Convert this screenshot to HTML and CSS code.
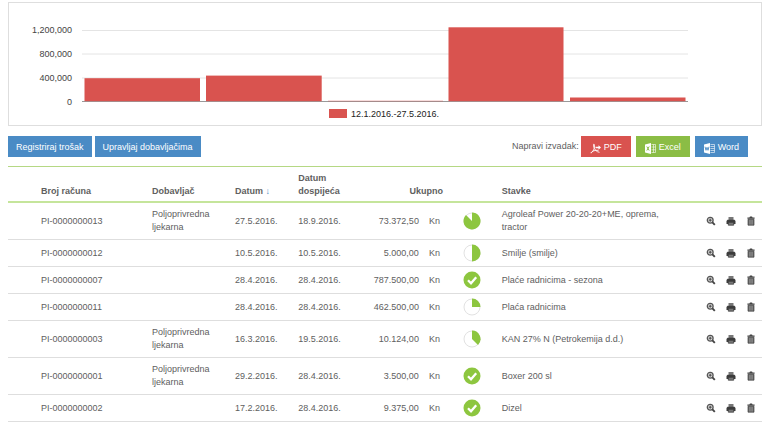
FILE: index.html
```html
<!DOCTYPE html>
<html lang="hr">
<head>
    <meta charset="UTF-8">
    <meta name="viewport" content="width=device-width, initial-scale=1.0">
    <title>Troškovi</title>
    <link rel="stylesheet" href="styles.css">
</head>
<body>
    <svg class="sprite" aria-hidden="true">
        <symbol id="i-check" viewBox="0 0 18 18">
            <circle cx="9" cy="9" r="8.5" fill="#8dc63f"/>
            <path d="M5 9.2l3 3 5.2-6" fill="none" stroke="#fff" stroke-width="2.3"/>
        </symbol>
        <symbol id="i-zoom" viewBox="0 0 10 10">
            <circle cx="4.2" cy="4.2" r="2.9" fill="#ddd" stroke="#555" stroke-width="1.3"/>
            <path d="M2.7 4.2h3M4.2 2.7v3" stroke="#444" stroke-width="1"/>
            <path d="M6.4 6.4l2.4 2.4" stroke="#444" stroke-width="1.9"/>
        </symbol>
        <symbol id="i-print" viewBox="0 0 10 10">
            <path d="M2.5 1h5v3h-5z" fill="#777"/>
            <path d="M1.5 3.8h7l1 1.2v3H.5V5z" fill="#3c3c3c"/>
            <path d="M2.3 6.3h5.4v2.9H2.3z" fill="#777" stroke="#3c3c3c" stroke-width=".8"/>
        </symbol>
        <symbol id="i-trash" viewBox="0 0 10 10">
            <path d="M1.4 1.6h2L4 .6h2l.6 1h2v1.2H1.4z" fill="#444"/>
            <path d="M2 3.2h6v6H2z" fill="#666" stroke="#444" stroke-width=".7"/>
            <path d="M3.7 4v4.5M5 4v4.5M6.3 4v4.5" stroke="#aaa" stroke-width=".5"/>
        </symbol>
    </svg>

    <section class="chart">
        <svg viewBox="0 0 752 122" role="img" aria-label="Troškovi 12.1.2016.-27.5.2016.">
            <g class="grid">
                <path d="M73 27.5h606M73 51h606M73 75h606"/>
            </g>
            <g class="axis-labels">
                <text x="63" y="30">1,200,000</text>
                <text x="63" y="54">800,000</text>
                <text x="63" y="78">400,000</text>
                <text x="63" y="102">0</text>
            </g>
            <path class="baseline" d="M73 98.5h606"/>
            <g class="bars">
                <rect x="75.5" y="75.2" width="115.5" height="23"/>
                <rect x="197" y="72.6" width="115.7" height="25.6"/>
                <rect x="319" y="97.8" width="115" height=".4"/>
                <rect x="439.5" y="24.3" width="115" height="73.9"/>
                <rect x="561" y="94.5" width="115.5" height="3.7"/>
            </g>
            <rect class="legend-key" x="320" y="106" width="18" height="9"/>
            <text class="legend" x="342" y="114">12.1.2016.-27.5.2016.</text>
        </svg>
    </section>

    <div class="toolbar">
        <button class="btn blue" type="button">Registriraj trošak</button>
        <button class="btn blue" type="button">Upravljaj dobavljačima</button>
        <div class="export">
            <span class="export-label">Napravi izvadak:</span>
            <button class="btn red" type="button">
                <svg class="file-icon" viewBox="0 0 11 11"><path d="M.8 10C3 9.400 5 5 4.300 1.600 4 .4 3.200 1.300 3.600 3 4.300 6.500 6.500 9 9.500 9.300M.8 10C2 7.800 5 7.200 8.500 7.300" fill="none" stroke="#fff" stroke-width=".9"/><path d="M5.500 3.800h3V2.300l2.500 2.200-2.500 2.200V5.200h-3z" fill="#fff"/></svg>
                PDF
            </button>
            <button class="btn green" type="button">
                <svg class="file-icon" viewBox="0 0 11 11"><path d="M0 1.500L6 0v11L0 9.500z" fill="#fff"/><path d="M6.500 1.500h4v8h-4M8.500 1.500v8M6.500 4h4M6.500 6.800h4" fill="none" stroke="#fff" stroke-width=".6"/><path d="M1.800 3.500l2.400 4M4.200 3.500l-2.400 4" stroke="#8bbd45" stroke-width="1"/></svg>
                Excel
            </button>
            <button class="btn blue" type="button">
                <svg class="file-icon" viewBox="0 0 11 11"><path d="M0 1.500L6 0v11L0 9.500z" fill="#fff"/><path d="M6.500 1.500h4v8h-4M6.500 3.500h4M6.500 5.500h4M6.500 7.500h4" fill="none" stroke="#fff" stroke-width=".6"/><path d="M1 3.700l1 3.600 1-3 1 3 1-3.600" fill="none" stroke="#4a8bc5" stroke-width=".9"/></svg>
                Word
            </button>
        </div>
    </div>

    <table class="expenses">
        <colgroup>
            <col class="c-number">
            <col class="c-supplier">
            <col class="c-date">
            <col class="c-due">
            <col class="c-amount">
            <col class="c-currency">
            <col class="c-status">
            <col class="c-items">
            <col class="c-actions">
        </colgroup>
        <thead>
            <tr>
                <th>Broj računa</th>
                <th>Dobavljač</th>
                <th>Datum <span class="sort">↓</span></th>
                <th>Datum dospijeća</th>
                <th class="total" colspan="2">Ukupno</th>
                <th></th>
                <th>Stavke</th>
                <th></th>
            </tr>
        </thead>
        <tbody>
            <tr>
                <td>PI-0000000013</td>
                <td>Poljoprivredna ljekarna</td>
                <td>27.5.2016.</td>
                <td>18.9.2016.</td>
                <td class="amount">73.372,50</td>
                <td class="currency">Kn</td>
                <td class="status"><svg viewBox="0 0 18 18"><circle class="ring" cx="9" cy="9" r="8"/><path class="slice" d="M9 9V.5A8.500 8.500 0 1 1 3 3z"/></svg></td>
                <td class="items">Agroleaf Power 20-20-20+ME, oprema, tractor</td>
                <td><div class="actions"><a href="#" aria-label="Pregled"><svg><use href="#i-zoom"/></svg></a><a href="#" aria-label="Ispis"><svg><use href="#i-print"/></svg></a><a href="#" aria-label="Obriši"><svg><use href="#i-trash"/></svg></a></div></td>
            </tr>
            <tr>
                <td>PI-0000000012</td>
                <td></td>
                <td>10.5.2016.</td>
                <td>10.5.2016.</td>
                <td class="amount">5.000,00</td>
                <td class="currency">Kn</td>
                <td class="status"><svg viewBox="0 0 18 18"><circle class="ring" cx="9" cy="9" r="8"/><path class="slice" d="M9 .5a8.500 8.500 0 0 1 0 17z"/></svg></td>
                <td class="items">Smilje (smilje)</td>
                <td><div class="actions"><a href="#" aria-label="Pregled"><svg><use href="#i-zoom"/></svg></a><a href="#" aria-label="Ispis"><svg><use href="#i-print"/></svg></a><a href="#" aria-label="Obriši"><svg><use href="#i-trash"/></svg></a></div></td>
            </tr>
            <tr>
                <td>PI-0000000007</td>
                <td></td>
                <td>28.4.2016.</td>
                <td>28.4.2016.</td>
                <td class="amount">787.500,00</td>
                <td class="currency">Kn</td>
                <td class="status"><svg><use href="#i-check"/></svg></td>
                <td class="items">Plaće radnicima - sezona</td>
                <td><div class="actions"><a href="#" aria-label="Pregled"><svg><use href="#i-zoom"/></svg></a><a href="#" aria-label="Ispis"><svg><use href="#i-print"/></svg></a><a href="#" aria-label="Obriši"><svg><use href="#i-trash"/></svg></a></div></td>
            </tr>
            <tr>
                <td>PI-0000000011</td>
                <td></td>
                <td>28.4.2016.</td>
                <td>28.4.2016.</td>
                <td class="amount">462.500,00</td>
                <td class="currency">Kn</td>
                <td class="status"><svg viewBox="0 0 18 18"><circle class="ring" cx="9" cy="9" r="8"/><path class="slice" d="M9 9V.5A8.500 8.500 0 0 1 17.500 9z"/></svg></td>
                <td class="items">Plaća radnicima</td>
                <td><div class="actions"><a href="#" aria-label="Pregled"><svg><use href="#i-zoom"/></svg></a><a href="#" aria-label="Ispis"><svg><use href="#i-print"/></svg></a><a href="#" aria-label="Obriši"><svg><use href="#i-trash"/></svg></a></div></td>
            </tr>
            <tr>
                <td>PI-0000000003</td>
                <td>Poljoprivredna ljekarna</td>
                <td>16.3.2016.</td>
                <td>19.5.2016.</td>
                <td class="amount">10.124,00</td>
                <td class="currency">Kn</td>
                <td class="status"><svg viewBox="0 0 18 18"><circle class="ring" cx="9" cy="9" r="8"/><path class="slice" d="M9 9V.5A8.500 8.500 0 0 1 15 15z"/></svg></td>
                <td class="items">KAN 27% N (Petrokemija d.d.)</td>
                <td><div class="actions"><a href="#" aria-label="Pregled"><svg><use href="#i-zoom"/></svg></a><a href="#" aria-label="Ispis"><svg><use href="#i-print"/></svg></a><a href="#" aria-label="Obriši"><svg><use href="#i-trash"/></svg></a></div></td>
            </tr>
            <tr>
                <td>PI-0000000001</td>
                <td>Poljoprivredna ljekarna</td>
                <td>29.2.2016.</td>
                <td>28.4.2016.</td>
                <td class="amount">3.500,00</td>
                <td class="currency">Kn</td>
                <td class="status"><svg><use href="#i-check"/></svg></td>
                <td class="items">Boxer 200 sl</td>
                <td><div class="actions"><a href="#" aria-label="Pregled"><svg><use href="#i-zoom"/></svg></a><a href="#" aria-label="Ispis"><svg><use href="#i-print"/></svg></a><a href="#" aria-label="Obriši"><svg><use href="#i-trash"/></svg></a></div></td>
            </tr>
            <tr>
                <td>PI-0000000002</td>
                <td></td>
                <td>17.2.2016.</td>
                <td>28.4.2016.</td>
                <td class="amount">9.375,00</td>
                <td class="currency">Kn</td>
                <td class="status"><svg><use href="#i-check"/></svg></td>
                <td class="items">Dizel</td>
                <td><div class="actions"><a href="#" aria-label="Pregled"><svg><use href="#i-zoom"/></svg></a><a href="#" aria-label="Ispis"><svg><use href="#i-print"/></svg></a><a href="#" aria-label="Obriši"><svg><use href="#i-trash"/></svg></a></div></td>
            </tr>
        </tbody>
    </table>
</body>
</html>
```
FILE: styles.css
```css
:root {
    --blue: #4a8bc5;
    --red: #d9534f;
    --green: #8bbd45;
    --line: #dedede;
}

* {
    box-sizing: border-box;
}

body {
    margin: 0;
    padding: 2px 6px 0 8px;
    font-family: "Liberation Sans", Arial, sans-serif;
    font-size: 9px;
    line-height: 13px;
    color: #606060;
    background: #fff;
}

.sprite {
    display: none;
}

.chart {
    border: 1px solid var(--line);
}

.chart svg {
    display: block;
    width: 100%;
}

.grid path {
    stroke: #e4e4e4;
}

.axis-labels text {
    text-anchor: end;
    fill: #444;
}

.bars rect,
.legend-key {
    fill: var(--red);
}

.baseline {
    stroke: #999;
}

.legend {
    fill: #222;
}

.toolbar {
    display: flex;
    flex-wrap: wrap;
    align-items: center;
    gap: 3px;
    margin: 10px 0 9px;
}

.export {
    display: flex;
    align-items: center;
    gap: 5px;
    margin-left: auto;
    padding-right: 14px;
}

.export-label {
    margin-right: -3px;
}

.btn {
    display: flex;
    align-items: center;
    gap: 3px;
    height: 21px;
    padding: 0 8px;
    border: 0;
    font-family: inherit;
    font-size: 9px;
    color: #fff;
    cursor: pointer;
}

.export .btn {
    padding: 0 9px;
}

.blue {
    background: var(--blue);
}

.red {
    background: var(--red);
}

.green {
    background: var(--green);
}

.file-icon {
    width: 11px;
    height: 11px;
    margin-top: 3px;
}

.expenses {
    width: 100%;
    table-layout: fixed;
    border-collapse: separate;
    border-spacing: 0;
    border-top: 1px solid #b5d884;
}

.c-number { width: 19.1%; }
.c-supplier { width: 11%; }
.c-date { width: 8.4%; }
.c-due { width: 8.4%; }
.c-amount { width: 7.6%; }
.c-currency { width: 3.2%; }
.c-status { width: 7.8%; }
.c-items { width: 26%; }
.c-actions { width: 8.5%; }

th,
td {
    height: 27px;
    padding: 5px 0;
    text-align: left;
    border-bottom: 1px solid var(--line);
}

th {
    padding: 5px 15px 3px 0;
    vertical-align: bottom;
    border-bottom: 2px solid #c5e59b;
}

th:first-child,
td:first-child {
    padding-left: 33px;
}

th.total {
    padding-right: 0;
    text-align: right;
}

.sort {
    color: var(--blue);
}

.amount {
    text-align: right;
}

.currency {
    padding-left: 10px;
}

.status {
    padding: 0;
    text-align: center;
}

.status svg {
    display: block;
    width: 18px;
    height: 18px;
    margin: 0 auto;
}

.ring {
    fill: #fff;
    stroke: #e2e2e2;
}

.slice {
    fill: #8dc63f;
}

.items {
    padding-right: 30px;
}

.actions {
    display: flex;
    justify-content: flex-end;
    gap: 10px;
    padding-right: 6px;
}

.actions a,
.actions svg {
    display: block;
    width: 10px;
    height: 10px;
}
```
